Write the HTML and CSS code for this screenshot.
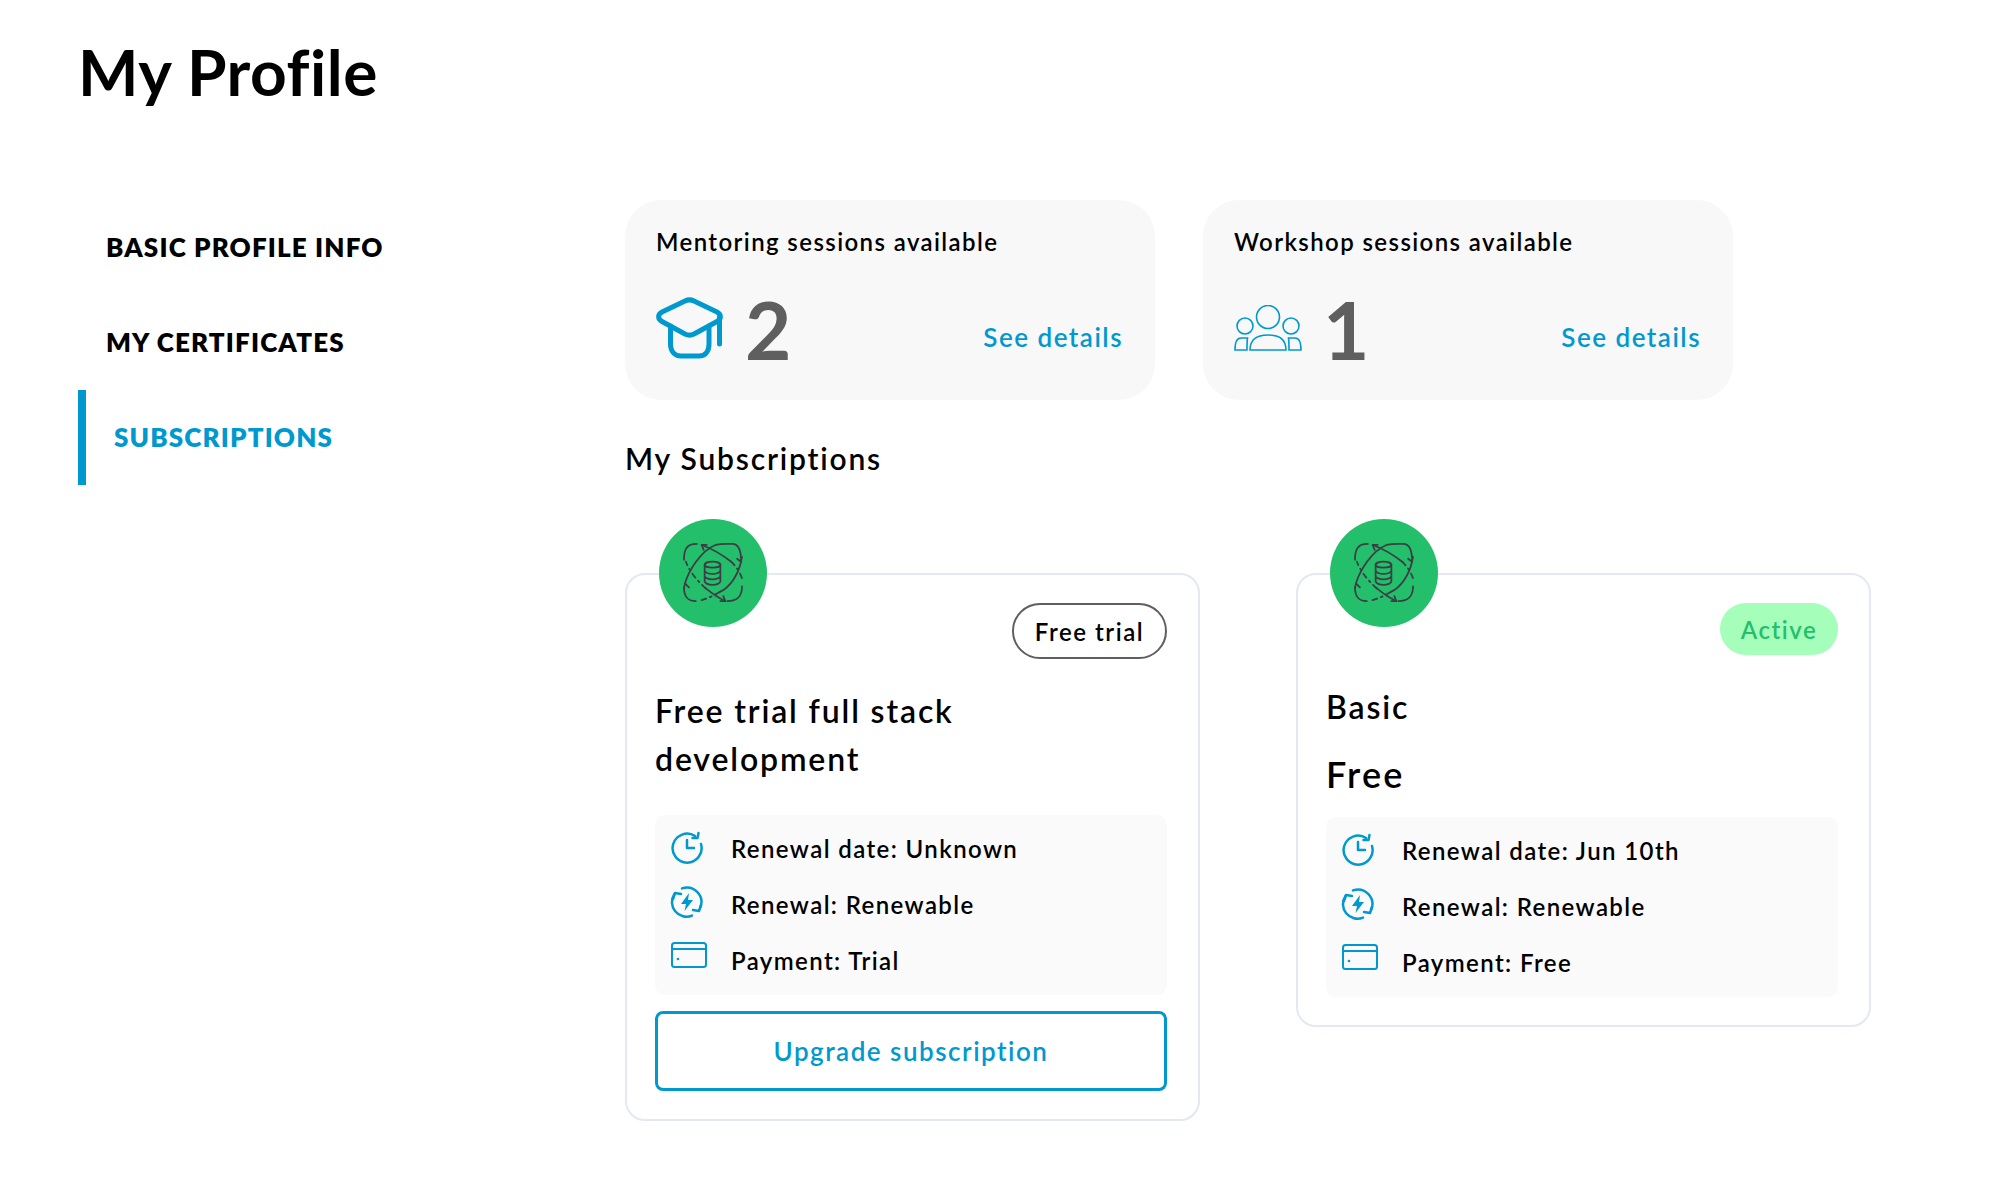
FILE: index.html
```html
<!DOCTYPE html>
<html lang="en">
<head>
<meta charset="utf-8">
<title>My Profile</title>
<link rel="stylesheet" href="styles.css">
</head>
<body>
<svg class="defs" width="0" height="0" aria-hidden="true">
  <symbol id="atom" viewBox="0 0 61 61">
    <g fill="none" stroke="#3d3d45" stroke-width="1.800" stroke-linecap="round" stroke-linejoin="round">
      <path d="M2 41C6 28 18 8 33 2C40 0.500 46 1 50 1C56 1 59 6 59 18"/>
      <path d="M59 19C56 32 48 45 37 50"/>
      <path d="M37 50C30 54 24 57 15 59" stroke-dasharray="5 4 2 4"/>
      <path d="M60 44C60 54 56 59 45 59"/>
      <path d="M1 45C1 54 4 59 13 59"/>
      <path d="M1 17C1 6 4 1 14 1"/>
      <path d="M19 2C30 6 40 12 49 19"/>
      <path d="M49 19C54 24 58 30 60 36" stroke-dasharray="5 4 2 4"/>
      <path d="M43 59C34 55 28 50 23 46"/>
      <path d="M23 46C14 38 6 28 3 19" stroke-dasharray="5 4 2 4"/>
      <path d="M19 2H24M19 2 21 7M59 19 55 16M59 19 60 14M2 41 1 46M2 41 6 45M43 59H38M43 59 41 54"/>
      <ellipse cx="30" cy="22" rx="8" ry="3"/>
      <path d="M22 22V39C22 41 26 42.500 30 42.500S38 41 38 39V22M22 28C22 30 26 31.500 30 31.500S38 30 38 28M22 33.500C22 35.500 26 37 30 37S38 35.500 38 33.500"/>
    </g>
  </symbol>
  <symbol id="clock" viewBox="0 0 34 34">
    <g fill="none" stroke="#0099cf" stroke-width="2.500" stroke-linecap="round" stroke-linejoin="round">
      <path d="M25 5A14.500 14.500 0 1 0 31 13"/>
      <path d="M17 9V17H24"/>
      <path d="M28.500 2 27.500 7 22.500 7"/>
    </g>
  </symbol>
  <symbol id="renew" viewBox="0 0 34 34">
    <g fill="none" stroke="#0099cf" stroke-width="2.500" stroke-linecap="round" stroke-linejoin="round">
      <path d="M12 3.400A14.500 14.500 0 0 1 30.500 22"/>
      <path d="M22 30.600A14.500 14.500 0 0 1 4.500 9"/>
      <path d="M3 14 5 8 11 9"/>
      <path d="M31 20 29 26 23 25"/>
    </g>
    <path d="M19 8 11 19H16L14.500 26 23 15H18Z" fill="#0099cf"/>
  </symbol>
  <symbol id="cardicon" viewBox="0 0 36 26">
    <g fill="none" stroke="#0099cf" stroke-width="2">
      <rect x="1" y="1" width="34" height="24" rx="2.500"/>
      <path d="M1 7H35"/>
    </g>
    <circle cx="7" cy="17" r="1.300" fill="#0099cf"/>
  </symbol>
</svg>

<div class="page">
  <h1 class="title">My Profile</h1>
  <div class="layout">
    <nav class="nav">
      <a class="nav-item">BASIC PROFILE INFO</a>
      <a class="nav-item">MY CERTIFICATES</a>
      <a class="nav-item nav-active">SUBSCRIPTIONS</a>
    </nav>
    <main class="content">
      <section class="stats">
        <div class="stat">
          <div class="stat-title">Mentoring sessions available</div>
          <div class="stat-row">
            <svg class="stat-icon cap" viewBox="0 0 67 62" fill="none" stroke="#0099cf" stroke-width="5" stroke-linecap="round" stroke-linejoin="round">
              <path d="M29 4 6 15C1.500 17.500 1.500 22 6 24.500L29 37C32 38.500 35 38.500 38 37L61 24.500C65.500 22 65.500 17.500 61 15L38 4C35 2.500 32 2.500 29 4Z"/>
              <path d="M14.500 29V47C14.500 54 18.500 59 25 59H43C49.500 59 53 54 53 47V29"/>
              <path d="M63.500 20V47"/>
            </svg>
            <span class="stat-num">2</span>
            <a class="stat-link">See details</a>
          </div>
        </div>
        <div class="stat">
          <div class="stat-title">Workshop sessions available</div>
          <div class="stat-row">
            <svg class="stat-icon people" viewBox="0 0 68 46" fill="none" stroke="#0099cf" stroke-width="1.600">
              <circle cx="34" cy="12" r="11.500"/>
              <circle cx="11" cy="21" r="8"/>
              <circle cx="57" cy="21" r="8"/>
              <path d="M16 45C16 33 24 30 34 30S52 33 52 45Z"/>
              <path d="M13.500 33H7C3 33 1 38 1 45H13C13 40 13 36 13.500 33Z"/>
              <path d="M54.500 33H61C65 33 67 38 67 45H55C55 40 55 36 54.500 33Z"/>
            </svg>
            <span class="stat-num num-wide">1</span>
            <a class="stat-link">See details</a>
          </div>
        </div>
      </section>

      <h2 class="section-title">My Subscriptions</h2>

      <section class="subs">
        <article class="sub">
          <div class="avatar"><svg class="atom"><use href="#atom"/></svg></div>
          <div class="badge-row"><span class="badge badge-trial">Free trial</span></div>
          <h3 class="sub-name sub-name-trial">Free trial full stack development</h3>
          <ul class="info">
            <li class="info-row"><svg class="info-icon icon-clock"><use href="#clock"/></svg>Renewal date: Unknown</li>
            <li class="info-row"><svg class="info-icon icon-renew"><use href="#renew"/></svg>Renewal: Renewable</li>
            <li class="info-row"><svg class="info-icon icon-card"><use href="#cardicon"/></svg>Payment: Trial</li>
          </ul>
          <button class="upgrade" type="button">Upgrade subscription</button>
        </article>
        <article class="sub">
          <div class="avatar"><svg class="atom"><use href="#atom"/></svg></div>
          <div class="badge-row"><span class="badge badge-active">Active</span></div>
          <h3 class="sub-name sub-name-basic">Basic</h3>
          <div class="sub-price">Free</div>
          <ul class="info">
            <li class="info-row"><svg class="info-icon icon-clock"><use href="#clock"/></svg>Renewal date: Jun 10th</li>
            <li class="info-row"><svg class="info-icon icon-renew"><use href="#renew"/></svg>Renewal: Renewable</li>
            <li class="info-row"><svg class="info-icon icon-card"><use href="#cardicon"/></svg>Payment: Free</li>
          </ul>
        </article>
      </section>
    </main>
  </div>
</div>
</body>
</html>
```

FILE: styles.css
```css
* { box-sizing: border-box; }

html, body {
  margin: 0;
  background: #fff;
  color: #000;
  font-family: Lato, "Open Sans", sans-serif;
}

.defs { position: absolute; }

.page { padding: 33px 0 0 78px; }

.title {
  margin: 0;
  font-size: 64px;
  line-height: 77px;
  font-weight: 700;
  letter-spacing: 0.500px;
}

.layout {
  display: grid;
  grid-template-columns: 547px 1fr;
  margin-top: 90px;
}

.nav { display: flex; flex-direction: column; }

.nav-item {
  display: flex;
  align-items: center;
  height: 95px;
  padding-left: 28px;
  padding-bottom: 2px;
  font-size: 26px;
  font-weight: 800;
  letter-spacing: 1.150px;
}

.nav-active {
  padding-left: 28px;
  border-left: 8px solid #0099cf;
  color: #0099cf;
}

.stats { display: flex; gap: 48px; }

.stat {
  display: flex;
  flex-direction: column;
  width: 530px;
  height: 200px;
  padding: 25px 32px 0 31px;
  background: #f8f8f8;
  border-radius: 36px;
}

.stat-title {
  font-size: 24px;
  line-height: 34px;
  font-weight: 600;
  letter-spacing: 1.400px;
}

.stat-row {
  display: flex;
  align-items: center;
  margin-top: 29px;
  height: 80px;
}

.stat-icon { flex: none; }
.cap { width: 67px; height: 62px; }
.people { width: 68px; height: 46px; }

.stat-num {
  margin-left: 22px;
  margin-top: 2px;
  font-size: 80px;
  line-height: 80px;
  font-weight: 700;
  color: #5f5f5f;
}

.num-wide { margin-left: 21px; }

.stat-link {
  margin-left: auto;
  margin-top: 18px;
  font-size: 26px;
  font-weight: 600;
  letter-spacing: 1.500px;
  color: #0099cf;
}

.section-title {
  margin: 40px 0 0;
  font-size: 30px;
  line-height: 36px;
  font-weight: 600;
  letter-spacing: 1.800px;
}

.subs {
  display: flex;
  align-items: flex-start;
  gap: 96px;
  margin-top: 97px;
}

.sub {
  position: relative;
  width: 575px;
  padding: 28px 31px 28px 28px;
  border: 2px solid #e3e8f2;
  border-radius: 20px;
  background: #fff;
}

.avatar {
  position: absolute;
  left: 32px;
  top: -56px;
  display: flex;
  align-items: center;
  justify-content: center;
  width: 108px;
  height: 108px;
  border-radius: 50%;
  background: #23bf6b;
}

.atom { width: 60px; height: 60px; }

.badge-row { display: flex; justify-content: flex-end; }

.badge {
  display: flex;
  align-items: center;
  justify-content: center;
  font-size: 24px;
  font-weight: 600;
  letter-spacing: 1.550px;
  border-radius: 28px;
}

.badge-trial {
  width: 155px;
  height: 56px;
  border: 2px solid #5f5f5f;
}

.badge-active {
  width: 118px;
  height: 52px;
  background: #a5ffbb;
  color: #23bf6b;
}

.sub-name {
  margin: 0;
  font-size: 32px;
  line-height: 48px;
  font-weight: 600;
  letter-spacing: 1.850px;
}

.sub-name-trial { margin-top: 28px; margin-bottom: 32px; width: 400px; }
.sub-name-basic { margin-top: 28px; }

.sub-price {
  margin: 19px 0 19px;
  font-size: 36px;
  line-height: 48px;
  font-weight: 600;
  letter-spacing: 2.200px;
}

.info {
  margin: 0;
  padding: 6px 0;
  list-style: none;
  background: #fafafa;
  border-radius: 10px;
}

.info-row {
  display: flex;
  align-items: center;
  height: 56px;
  padding-bottom: 2px;
  padding-left: 14px;
  font-size: 24px;
  font-weight: 600;
  letter-spacing: 1.400px;
}

.info-icon {
  flex: none;
  width: 36px;
  height: 34px;
  margin-right: 26px;
}

.icon-clock { margin-top: -1px; }
.icon-renew { margin-top: -5px; }
.icon-card { margin: -10px 24px 0 2px; }

.upgrade {
  display: block;
  width: 100%;
  height: 80px;
  margin-top: 16px;
  border: 3px solid #0099cf;
  border-radius: 8px;
  background: #fff;
  color: #0099cf;
  font-family: inherit;
  font-size: 26px;
  font-weight: 600;
  letter-spacing: 1.500px;
}
```
